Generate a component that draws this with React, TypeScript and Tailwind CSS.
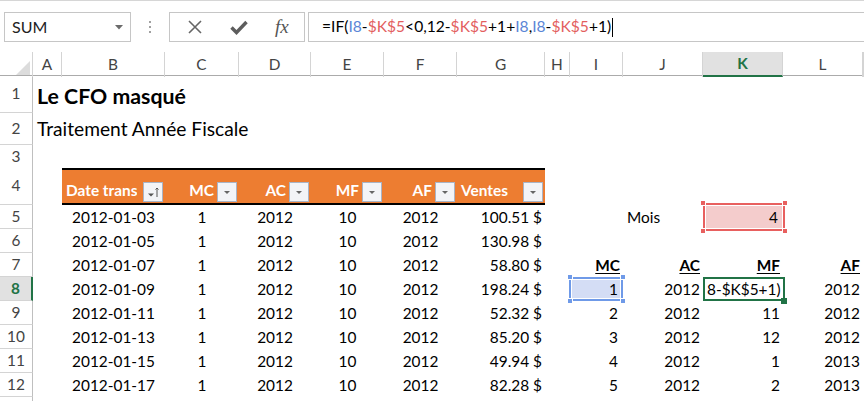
import React from "react";

// Shared column template: row header, then A..L, then the rest of the window
const COLS =
  "grid grid-cols-[33px_29px_103px_74px_72px_73px_73px_88px_25px_53px_80px_80px_80px_1fr]";

const LETTERS = ["A", "B", "C", "D", "E", "F", "G", "H", "I", "J", "K", "L", ""];

const SALES = [
  { date: "2012-01-03", ventes: "100.51" },
  { date: "2012-01-05", ventes: "130.98" },
  { date: "2012-01-07", ventes: "58.80" },
  { date: "2012-01-09", ventes: "198.24" },
  { date: "2012-01-11", ventes: "52.32" },
  { date: "2012-01-13", ventes: "85.20" },
  { date: "2012-01-15", ventes: "49.94" },
  { date: "2012-01-17", ventes: "82.28" },
];

// Right-hand helper table, keyed by sheet row
const SIDE: Record<number, [string, string, string, string]> = {
  8: ["1", "2012", "8-$K$5+1)", "2012"],
  9: ["2", "2012", "11", "2012"],
  10: ["3", "2012", "12", "2012"],
  11: ["4", "2012", "1", "2013"],
  12: ["5", "2012", "2", "2013"],
};

function RowHead({ n, active }: { n?: number; active?: boolean }) {
  return (
    <div
      className={
        active
          ? "flex items-center justify-center border-b border-[#d4d4d4] border-r-2 border-r-[#217346] bg-[#e1e1e1] font-bold text-[#217346]"
          : "flex items-center justify-center border-b border-[#d4d4d4] border-r border-r-[#bfbfbf] bg-white text-[#444]"
      }
    >
      {n}
    </div>
  );
}

function Cell({
  children,
  align = "center",
  className = "",
}: {
  children?: React.ReactNode;
  align?: "left" | "center" | "right";
  className?: string;
}) {
  const a =
    align === "left" ? "justify-start pl-[4px]" : align === "right" ? "justify-end pr-[3px]" : "justify-center";
  return <div className={`relative flex items-center whitespace-nowrap ${a} ${className}`}>{children}</div>;
}

function Corner({ pos, color }: { pos: string; color: string }) {
  return <span className={`absolute h-[6px] w-[6px] border border-white ${pos} ${color}`} />;
}

function FilterBtn({ sort }: { sort?: boolean }) {
  return (
    <span className="flex h-[20px] w-[20px] shrink-0 items-center justify-center border border-[#a9b4c6] bg-[#f3f4f7]">
      {sort ? (
        <svg width="14" height="14" viewBox="0 0 14 14">
          <path d="M2 8.5h6l-3 3z" fill="#555" />
          <path d="M11 12V3M9.5 4.5 11 3l1.5 1.5" stroke="#555" strokeWidth="1" fill="none" />
        </svg>
      ) : (
        <svg width="10" height="10" viewBox="0 0 10 10">
          <path d="M2 4h6l-3 3z" fill="#666" />
        </svg>
      )}
    </span>
  );
}

function HeadCell({ label, sort, left }: { label: string; sort?: boolean; left?: boolean }) {
  return (
    <div className="flex items-end justify-end gap-[3px] overflow-hidden border-y-2 border-black bg-[#ed7d31] pb-[1px] pr-[2px]">
      <span
        className={
          left
            ? "mr-auto overflow-hidden whitespace-nowrap pl-[4px] font-bold text-white"
            : "whitespace-nowrap font-bold text-white"
        }
      >
        {label}
      </span>
      <FilterBtn sort={sort} />
    </div>
  );
}

export default function App() {
  return (
    <div className="h-[401px] w-[864px] overflow-hidden bg-white font-['Lato',sans-serif] text-[15.4px] text-black">
      {/* Name box + formula bar */}
      <div className="h-[52px] border-t border-[#d6d6d6] bg-white pt-[2px]">
        <div className="mt-[9px] flex h-[30px] items-stretch">
          <div className="ml-[4px] flex w-[127px] items-center justify-between border border-[#c6c6c6] pl-[7px] pr-[7px] text-[16px] text-[#222]">
            <span>SUM</span>
            <svg width="8" height="5" viewBox="0 0 8 5">
              <path d="M0 0h8L4 4.5z" fill="#6b6b6b" />
            </svg>
          </div>
          <div className="flex w-[38px] flex-col items-center justify-center gap-[3px]">
            <span className="h-[2px] w-[2px] bg-[#a0a0a0]" />
            <span className="h-[2px] w-[2px] bg-[#a0a0a0]" />
            <span className="h-[2px] w-[2px] bg-[#a0a0a0]" />
          </div>
          <div className="flex w-[136px] items-center border border-[#c6c6c6]">
            <svg className="ml-[18px]" width="14" height="14" viewBox="0 0 14 14">
              <path d="M1 1l12 12M13 1 1 13" stroke="#666" strokeWidth="1.6" fill="none" />
            </svg>
            <svg className="ml-[28px]" width="18" height="15" viewBox="0 0 18 15">
              <path d="M1.5 7.5 6.5 12.5 16.5 2" stroke="#5d5d5d" strokeWidth="3.4" fill="none" />
            </svg>
            <span className="ml-[27px] font-['Liberation_Serif',serif] text-[19px] italic text-[#555]">fx</span>
          </div>
          <div className="ml-[3px] flex flex-1 items-center border border-r-0 border-[#c6c6c6] pl-[13px] text-[15.6px]">
            <span>=IF(</span>
            <span className="text-[#5b86d6]">I8</span>
            <span>-</span>
            <span className="text-[#e35f5f]">$K$5</span>
            <span>&lt;0,12-</span>
            <span className="text-[#e35f5f]">$K$5</span>
            <span>+1+</span>
            <span className="text-[#5b86d6]">I8</span>
            <span>,</span>
            <span className="text-[#5b86d6]">I8</span>
            <span>-</span>
            <span className="text-[#e35f5f]">$K$5</span>
            <span>+1)</span>
            <span className="ml-[1px] h-[19px] w-[1px] bg-black" />
          </div>
        </div>
      </div>

      {/* Column headers */}
      <div className={`${COLS} h-[24px] border-b border-[#ababab]`}>
        <div className="relative border-r border-[#d4d4d4]">
          <svg className="absolute bottom-[2px] right-[2px]" width="14" height="14" viewBox="0 0 14 14">
            <path d="M14 0V14H0z" fill="#dcdcdc" />
          </svg>
        </div>
        {LETTERS.map((l, i) =>
          l === "K" ? (
            <div
              key={i}
              className="flex items-center justify-center border-b-2 border-r border-b-[#217346] border-r-[#d4d4d4] bg-[#e1e1e1] font-bold text-[#217346]"
            >
              {l}
            </div>
          ) : (
            <div key={i} className="flex items-center justify-center border-r border-[#d4d4d4] text-[#444]">
              {l}
            </div>
          ),
        )}
      </div>

      {/* Row 1 */}
      <div className={`${COLS} h-[37px]`}>
        <RowHead n={1} />
        <Cell align="left" className="overflow-visible pt-[4px] text-[21.3px] font-bold">
          Le CFO masqué
        </Cell>
      </div>

      {/* Row 2 */}
      <div className={`${COLS} h-[32px]`}>
        <RowHead n={2} />
        <Cell align="left" className="overflow-visible text-[19.2px]">
          Traitement Année Fiscale
        </Cell>
      </div>

      {/* Row 3 */}
      <div className={`${COLS} h-[23px]`}>
        <RowHead n={3} />
      </div>

      {/* Row 4: table header */}
      <div className={`${COLS} h-[37px]`}>
        <RowHead n={4} />
        <div />
        <HeadCell label="Date trans" sort left />
        <HeadCell label="MC" />
        <HeadCell label="AC" />
        <HeadCell label="MF" />
        <HeadCell label="AF" />
        <HeadCell label="Ventes" left />
      </div>

      {/* Rows 5..12 */}
      {SALES.map((s, i) => {
        const r = i + 5;
        const side = SIDE[r];
        return (
          <div key={r} className={`${COLS} h-[24px]`}>
            <RowHead n={r} active={r === 8} />
            <div />
            <Cell>{s.date}</Cell>
            <Cell>1</Cell>
            <Cell>2012</Cell>
            <Cell>10</Cell>
            <Cell>2012</Cell>
            <Cell align="right">{s.ventes} $</Cell>
            <div />
            {r === 5 && (
              <>
                <div />
                <Cell align="left">Mois</Cell>
                <Cell align="right" className="pr-[5px]">
                  <span className="absolute inset-x-[0px] -right-[2px] inset-y-[-2px] border-2 border-[#e8605f] bg-[#f4cccc] shadow-[inset_0_0_0_1px_#fff]" />
                  <Corner pos="-left-[3px] -top-[5px]" color="bg-[#e8605f]" />
                  <Corner pos="-right-[5px] -top-[5px]" color="bg-[#e8605f]" />
                  <Corner pos="-left-[3px] -bottom-[5px]" color="bg-[#e8605f]" />
                  <Corner pos="-right-[5px] -bottom-[5px]" color="bg-[#e8605f]" />
                  <span className="relative">4</span>
                </Cell>
              </>
            )}
            {r === 7 && (
              <>
                <Cell align="right" className="font-bold underline underline-offset-2">MC</Cell>
                <Cell align="right" className="font-bold underline underline-offset-2">AC</Cell>
                <Cell align="right" className="font-bold underline underline-offset-2">MF</Cell>
                <Cell align="right" className="font-bold underline underline-offset-2">AF</Cell>
              </>
            )}
            {side && (
              <>
                {r === 8 ? (
                  <Cell align="right" className="pr-[5px]">
                    <span className="absolute -left-[1px] right-[0px] inset-y-[0px] border-2 border-[#6f9ae8] bg-[#d4ddf5] shadow-[inset_0_0_0_1px_#fff]" />
                    <Corner pos="-left-[3px] -top-[3px]" color="bg-[#6f9ae8]" />
                    <Corner pos="-right-[3px] -top-[3px]" color="bg-[#6f9ae8]" />
                    <Corner pos="-left-[3px] -bottom-[3px]" color="bg-[#6f9ae8]" />
                    <Corner pos="-right-[3px] -bottom-[3px]" color="bg-[#6f9ae8]" />
                    <span className="relative">{side[0]}</span>
                  </Cell>
                ) : (
                  <Cell align="right" className="pr-[5px]">{side[0]}</Cell>
                )}
                <Cell align="right">{side[1]}</Cell>
                {r === 8 ? (
                  <Cell align="left" className="overflow-visible pl-[4px]">
                    <span className="absolute inset-y-[0px] left-0 -right-[2px] border-2 border-[#217346]" />
                    <span className="absolute -bottom-[3px] -right-[4px] h-[6px] w-[6px] bg-[#217346]" />
                    <span className="relative">{side[2]}</span>
                  </Cell>
                ) : (
                  <Cell align="right">{side[2]}</Cell>
                )}
                <Cell align="right">{side[3]}</Cell>
              </>
            )}
          </div>
        );
      })}

      <div className={`${COLS} h-[24px]`}>
        <RowHead />
      </div>
    </div>
  );
}
